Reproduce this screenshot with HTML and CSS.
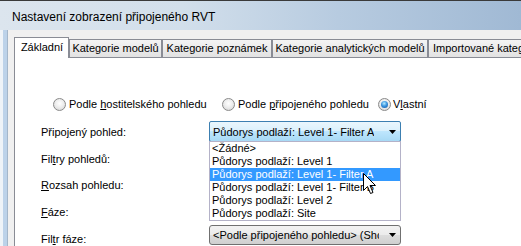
FILE: index.html
```html
<!DOCTYPE html>
<html lang="cs">
<head>
<meta charset="utf-8">
<title>Nastavení zobrazení připojeného RVT</title>
<link rel="stylesheet" href="styles.css">
</head>
<body>
<div class="window">
  <div class="titlebar">Nastavení zobrazení připojeného RVT</div>
  <div class="frame">
    <div class="frame-left"></div>
    <div class="client">
      <div class="tabs">
        <div class="tab active t1">Základní</div>
        <div class="tab t2">Kategorie modelů</div>
        <div class="tab t3">Kategorie poznámek</div>
        <div class="tab t4">Kategorie analytických modelů</div>
        <div class="tab t5">Importované kategorie</div>
      </div>
      <div class="panel">
        <div class="radios">
          <div class="radio r1"><span class="dot"></span><span>Podle <u>h</u>ostitelského pohledu</span></div>
          <div class="radio r2"><span class="dot"></span><span>Podle <u>p</u>řipojeného pohledu</span></div>
          <div class="radio r3"><span class="dot checked"></span><span>V<u>l</u>astní</span></div>
        </div>
        <div class="form">
          <div class="row">
            <span class="label">Připo<u>j</u>ený pohled:</span>
            <div class="combo-wrap">
              <div class="combo open">
                <span class="combo-text">Půdorys podlaží: Level 1- Filter A</span>
                <svg class="arrow" width="7" height="4" viewBox="0 0 7 4"><path d="M0 0H7L3.5 4Z" fill="#000"/></svg>
              </div>
              <div class="list">
                <div class="item">&lt;Žádné&gt;</div>
                <div class="item">Půdorys podlaží: Level 1</div>
                <div class="item sel">Půdorys podlaží: Level 1- Filter A</div>
                <div class="item">Půdorys podlaží: Level 1- Filter B</div>
                <div class="item">Půdorys podlaží: Level 2</div>
                <div class="item">Půdorys podlaží: Site</div>
                <svg class="cursor" width="13" height="21" viewBox="0 0 13 21"><path d="M0.5 0.5V17.5L4.5 13.5L7.5 20.5L10 19.5L7 12.5H12.5Z" fill="#fff" stroke="#000" stroke-width="1" stroke-linejoin="miter"/></svg>
              </div>
            </div>
          </div>
          <div class="row"><span class="label">Fil<u>t</u>ry pohledů:</span></div>
          <div class="row short"><span class="label"><u>R</u>ozsah pohledu:</span></div>
          <div class="row"><span class="label"><u>F</u>áze:</span></div>
          <div class="row">
            <span class="label">Fil<u>t</u>r fáze:</span>
            <div class="combo-wrap top">
              <div class="combo">
                <span class="combo-text clip">&lt;Podle připojeného pohledu&gt; (Show previous + new)</span>
                <svg class="arrow" width="7" height="4" viewBox="0 0 7 4"><path d="M0 0H7L3.5 4Z" fill="#000"/></svg>
              </div>
            </div>
          </div>
        </div>
      </div>
    </div>
  </div>
</div>
</body>
</html>
```
FILE: styles.css
```css
html, body {
  margin: 0;
  padding: 0;
}
body {
  width: 521px;
  height: 246px;
  overflow: hidden;
  font-family: "Liberation Sans", Arial, sans-serif;
  font-size: 11px;
  color: #000;
}
.window {
  width: 521px;
  height: 246px;
  overflow: hidden;
  background: #f0f0f0;
}
.titlebar {
  height: 30px;
  box-sizing: border-box;
  border-top: 1px solid #3a3a3a;
  padding: 8px 0 0 12px;
  font-size: 12px;
  line-height: 16px;
  white-space: nowrap;
  background: linear-gradient(to right, #dce5ee 0%, #d2dfeb 35%, #b7cbe0 65%, #a0b9d4 100%);
}
.frame {
  display: flex;
  height: 216px;
}
.frame-left {
  width: 8px;
  flex: none;
  background: linear-gradient(to right, #eef3f8 0, #eef3f8 3px, #bcd2e9 3px, #bcd2e9 7px, #a3b6ca 7px, #a3b6ca 8px);
}
.client {
  flex: 1;
  min-width: 0;
  padding: 7px 0 0 6px;
  overflow: hidden;
  background: #f0f0f0;
}
.tabs {
  display: flex;
  align-items: flex-end;
  height: 20px;
}
.tab {
  flex: none;
  height: 18px;
  box-sizing: border-box;
  border: 1px solid #898c95;
  border-bottom: none;
  padding: 0;
  text-align: center;
  line-height: 16px;
  white-space: nowrap;
  overflow: hidden;
  background: linear-gradient(#f4f4f4, #e2e2e2);
}
.t1 { width: 55px; }
.t2 { width: 93px; }
.t3 { width: 110px; }
.t4 { width: 156px; }
.t5 { width: 130px; text-align: left; padding-left: 4px; }
.tab.active {
  height: 21px;
  margin-bottom: -1px;
  padding-left: 1px;
  line-height: 18px;
  background: #fff;
  position: relative;
  z-index: 1;
}
.panel {
  background: #fff;
  border-top: 1px solid #898c95;
  border-left: 1px solid #898c95;
  height: 200px;
}
.radios {
  display: flex;
  height: 13px;
  margin: 40px 0 7px 38px;
  line-height: 13px;
  white-space: nowrap;
}
.radio {
  display: flex;
  align-items: center;
  flex: none;
}
.r1 { width: 169px; }
.r2 { width: 156px; }
.dot {
  position: relative;
  width: 13px;
  height: 13px;
  box-sizing: border-box;
  border-radius: 50%;
  border: 1px solid #8a8a8a;
  margin-right: 3px;
  background: radial-gradient(circle at 50% 40%, #ffffff 0, #eeeeee 45%, #d0d0d0 100%);
}
.r3 .dot { margin-right: 2px; }
.dot.checked::after {
  content: "";
  position: absolute;
  left: 2px;
  top: 2px;
  width: 7px;
  height: 7px;
  border-radius: 50%;
  background: radial-gradient(circle at 45% 35%, #b6ecff 0, #3b95e0 45%, #0d4f9c 100%);
}
.form {
  margin-left: 26px;
}
.row {
  display: flex;
  align-items: center;
  height: 27px;
}
.row.short {
  height: 26px;
}
.label {
  width: 168px;
  flex: none;
  white-space: nowrap;
}
.combo-wrap {
  position: relative;
  width: 192px;
  flex: none;
}
.combo-wrap.top {
  align-self: flex-start;
}
.combo {
  height: 21px;
  box-sizing: border-box;
  border: 1px solid #707070;
  border-radius: 3px;
  display: flex;
  align-items: center;
  padding-left: 3px;
  white-space: nowrap;
  background: linear-gradient(#f2f2f2 0%, #ebebeb 50%, #dddddd 50%, #cfcfcf 100%);
}
.combo-wrap.top .combo {
  height: 20px;
}
.combo.open {
  border-color: #3c7fb1;
  border-radius: 2px;
  background: linear-gradient(#eaf6fd 0%, #d9f0fc 50%, #bee6fd 50%, #a7d9f5 100%);
}
.combo-text {
  flex: none;
  overflow: hidden;
  white-space: nowrap;
}
.combo-text.clip {
  width: 166px;
}
.arrow {
  margin-left: auto;
  margin-right: 4px;
  flex: none;
}
.list {
  position: absolute;
  top: 20px;
  left: 0;
  width: 192px;
  box-sizing: border-box;
  border: 1px solid #b4b2c8;
  background: #fff;
  z-index: 2;
}
.item {
  height: 13px;
  line-height: 13px;
  padding-left: 2px;
  white-space: nowrap;
}
.item.sel {
  background: #3399ff;
  color: #fff;
}
.cursor {
  position: absolute;
  left: 153px;
  top: 31px;
}
```
